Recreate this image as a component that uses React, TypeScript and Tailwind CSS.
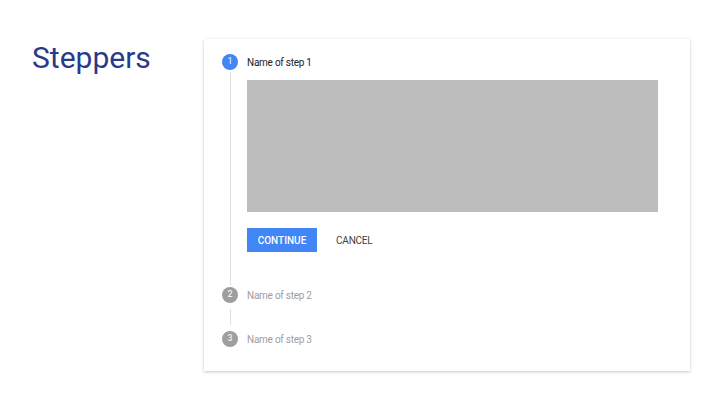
const STEPS_DONE = ["Name of step 2", "Name of step 3"];

function StepCircle({ n, active }: { n: number; active?: boolean }) {
  return (
    <div
      className={
        active
          ? "w-4 h-4 rounded-full bg-[#4285f4] text-white text-[9px] flex items-center justify-center shrink-0"
          : "w-4 h-4 rounded-full bg-[#9e9e9e] text-white text-[9px] flex items-center justify-center shrink-0"
      }
    >
      {n}
    </div>
  );
}

export default function App() {
  return (
    <div
      className="w-[720px] h-[405px] bg-white flex items-start"
      style={{ fontFamily: "Roboto, 'Liberation Sans', sans-serif" }}
    >
      {/* Slide title */}
      <div className="w-[204px] pl-[32px] pt-[39px]">
        <h1 className="text-[30px] leading-[38px] text-[#2a3a8a]">Steppers</h1>
      </div>

      {/* Stepper card */}
      <div className="mt-[39px] w-[486px] h-[332px] bg-white shadow-[0_1px_3px_rgba(0,0,0,0.22)] pt-[15px] pl-[18px] pr-[32px]">
        {/* Step 1 */}
        <div className="flex items-center gap-[9px] h-4">
          <StepCircle n={1} active />
          <span className="text-[10px] tracking-[-0.25px] text-[#212121]">Name of step 1</span>
        </div>
        <div className="flex gap-[9px]">
          <div className="w-4 flex justify-center py-[2px]">
            <div className="w-px bg-[#e0e0e0]" />
          </div>
          <div className="flex-1 pt-[10px] pb-[35px]">
            <div className="h-[132px] bg-[#bdbdbd]" />
            <div className="flex items-center mt-[16px] gap-[19px]">
              <button className="h-6 w-[70px] bg-[#4285f4] text-white text-[10px] font-medium">
                CONTINUE
              </button>
              <button className="text-[10px] text-[#424242] tracking-[-0.2px]">CANCEL</button>
            </div>
          </div>
        </div>

        {/* Remaining steps */}
        {STEPS_DONE.map((label, i) => (
          <div key={label}>
            <div className="flex items-center gap-[9px] h-4">
              <StepCircle n={i + 2} />
              <span className="text-[10px] tracking-[-0.25px] text-[#9e9e9e]">{label}</span>
            </div>
            {i === 0 && (
              <div className="w-4 h-[28px] flex justify-center py-[6px]">
                <div className="w-px bg-[#e0e0e0]" />
              </div>
            )}
          </div>
        ))}
      </div>
    </div>
  );
}
